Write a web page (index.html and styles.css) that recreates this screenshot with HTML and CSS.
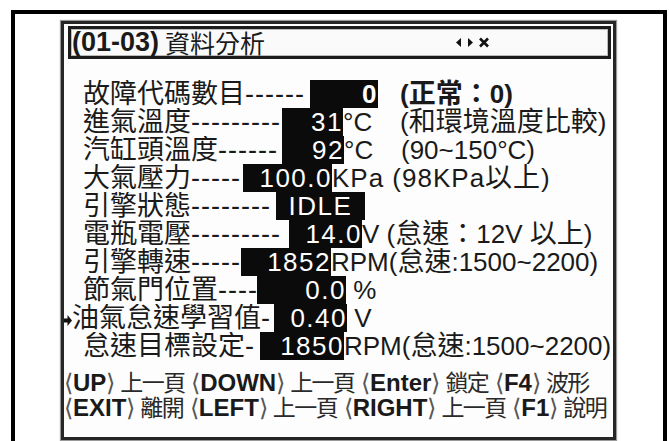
FILE: index.html
```html
<!DOCTYPE html>
<html lang="zh-Hant">

<head>
    <meta charset="UTF-8">
    <meta name="viewport" content="width=device-width, initial-scale=1.0">
    <title>資料分析</title>
    <link rel="stylesheet" href="styles.css">
</head>

<body>
    <div class="frame">
        <div class="screen">
            <div class="title">
                <span class="tcode">(01-03)</span>
                <span class="tname">資料分析</span>
                <svg class="nav" width="36" height="11" viewBox="0 0 36 11">
                    <polygon points="6,1 6,10 1,5.5" fill="#111" />
                    <polygon points="13,1 13,10 18,5.5" fill="#111" />
                    <path d="M25 1.5 L33 9.5 M33 1.5 L25 9.5" stroke="#111" stroke-width="2.6" />
                </svg>
            </div>

            <div class="rows">
                <div class="row r1">
                    <span class="lbl">故障代碼數目<span class="d">------</span></span>
                    <span class="val b">0</span>
                    <span class="note b">(<span class="c">正常：</span>0)</span>
                </div>
                <div class="row r2">
                    <span class="lbl">進氣溫度<span class="d">---------</span></span>
                    <span class="val">31</span>
                    <span class="unit deg">°C</span>
                    <span class="note">(<span class="c">和環境溫度比較</span>)</span>
                </div>
                <div class="row r3">
                    <span class="lbl">汽缸頭溫度<span class="d">------</span></span>
                    <span class="val">92</span>
                    <span class="unit deg">°C</span>
                    <span class="note">(90~150°C)</span>
                </div>
                <div class="row r4">
                    <span class="lbl">大氣壓力<span class="d">-----</span></span>
                    <span class="val">100.0</span>
                    <span class="unit wide">KPa (98KPa<span class="c">以上</span>)</span>
                </div>
                <div class="row r5">
                    <span class="lbl">引擎狀態<span class="d">--------</span></span>
                    <span class="val mid">IDLE</span>
                </div>
                <div class="row r6">
                    <span class="lbl">電瓶電壓<span class="d">---------</span></span>
                    <span class="val">14.0</span>
                    <span class="unit">V (<span class="c">怠速：</span>12V <span class="c">以上</span>)</span>
                </div>
                <div class="row r7">
                    <span class="lbl">引擎轉速<span class="d">-----</span></span>
                    <span class="val">1852</span>
                    <span class="unit">RPM(<span class="c">怠速</span>:1500~2200)</span>
                </div>
                <div class="row r8">
                    <span class="lbl">節氣門位置<span class="d">----</span></span>
                    <span class="val">0.0</span>
                    <span class="unit"> %</span>
                </div>
                <div class="row r9">
                    <span class="lbl"><svg class="mark" width="8" height="11" viewBox="0 0 8 11">
                            <polygon points="0,3.5 3.5,3.5 3.5,0 8,5.5 3.5,11 3.5,7.5 0,7.5" fill="#111" />
                        </svg>油氣怠速學習值<span class="d">-</span></span>
                    <span class="val">0.40</span>
                    <span class="unit"> V</span>
                </div>
                <div class="row r10">
                    <span class="lbl">怠速目標設定<span class="d">-</span></span>
                    <span class="val">1850</span>
                    <span class="unit">RPM(<span class="c">怠速</span>:1500~2200)</span>
                </div>
            </div>

            <div class="keys">
                <div class="krow">
                    <span class="br">⟨</span><b>UP</b><span class="br">⟩</span><span class="kt">上一頁</span>
                    <span class="br">⟨</span><b>DOWN</b><span class="br">⟩</span><span class="kt">上一頁</span>
                    <span class="br">⟨</span><b>Enter</b><span class="br">⟩</span><span class="kt">鎖定</span>
                    <span class="br">⟨</span><b>F4</b><span class="br">⟩</span><span class="kt">波形</span>
                </div>
                <div class="krow">
                    <span class="br">⟨</span><b>EXIT</b><span class="br">⟩</span><span class="kt">離開</span>
                    <span class="br">⟨</span><b>LEFT</b><span class="br">⟩</span><span class="kt">上一頁</span>
                    <span class="br">⟨</span><b>RIGHT</b><span class="br">⟩</span><span class="kt">上一頁</span>
                    <span class="br">⟨</span><b>F1</b><span class="br">⟩</span><span class="kt">說明</span>
                </div>
            </div>
        </div>
    </div>
</body>

</html>
```

FILE: styles.css
```css
body {
    margin: 0;
    background-color: #fff;
    color: #1a1a1a;
    font-family: "Liberation Sans", "Noto Sans CJK TC", sans-serif;
    overflow: hidden;
    height: 441px;
}

.frame {
    margin: 10px 0 0 11px;
    width: 656px;
    height: 431px;
    border: 4px solid #000;
    border-bottom: none;
    padding: 7px 0 0 46px;
    box-sizing: border-box;
}

.screen {
    width: 555px;
    height: 419px;
    border: 3px solid #262626;
    box-shadow: 0 0 1px 1px #9a9a9a;
    box-sizing: border-box;
    background: #fdfdfd;
}

/* title bar */
.title {
    margin: 2px 2px 0 4px;
    height: 33px;
    border: 3px solid #1c1c1c;
    box-shadow: inset 0 0 0 1px #bbb;
    box-sizing: border-box;
    display: flex;
    align-items: center;
    padding-left: 1px;
    background: #fafafa;
}

.tcode {
    font-size: 27px;
    font-weight: bold;
    line-height: 27px;
}

.tname {
    font-family: "Noto Sans CJK TC", sans-serif;
    font-size: 25px;
    line-height: 27px;
    margin-left: 6px;
}

.nav {
    margin-left: auto;
    margin-right: 117px;
}

/* data rows */
.rows {
    margin-top: 21px;
}

.row {
    display: flex;
    height: 28px;
    line-height: 28px;
    font-size: 26px;
    white-space: pre;
    padding-left: 19px;
}

.c {
    font-size: 27px;
}

.lbl {
    font-size: 27px;
    overflow: hidden;
    flex: none;
}

.lbl .d {
    letter-spacing: 1px;
}

.val {
    background: #0b0b0b;
    color: #fff;
    text-align: right;
    flex: none;
    box-sizing: border-box;
    letter-spacing: 1.5px;
}

.val.mid {
    text-align: center;
}

.b {
    font-weight: bold;
}

.unit.deg {
    width: 35px;
}

.unit.wide {
    letter-spacing: 1px;
}

.note {
    margin-left: 22px;
}

.r1 .lbl { width: 227px; }
.r1 .val { width: 68px; }
.r2 .lbl, .r3 .lbl { width: 199px; }
.r2 .val { width: 61px; }
.r3 .val { width: 62px; }
.r4 .lbl { width: 160px; }
.r4 .val { width: 89px; }
.r5 .lbl { width: 193px; }
.r5 .val { width: 89px; }
.r6 .lbl { width: 206px; }
.r6 .val { width: 73px; }
.r7 .lbl { width: 158px; }
.r7 .val { width: 90px; }
.r8 .lbl { width: 174px; }
.r8 .val { width: 89px; }
.r9 { padding-left: 0; }
.r9 .lbl { width: 210px; }
.r9 .val { width: 73px; }
.r10 .lbl { width: 177px; }
.r10 .val { width: 84px; }

.mark {
    vertical-align: 1px;
}

/* key legend */
.keys {
    margin-top: 9px;
}

.krow {
    height: 25px;
    line-height: 25px;
    font-size: 24px;
    color: #2a2a2a;
    white-space: nowrap;
}

.krow b {
    color: #1a1a1a;
}

.kt {
    font-family: "Noto Sans CJK TC", sans-serif;
    font-size: 23px;
    letter-spacing: -1.6px;
    margin-left: 5px;
}

.br {
    font-family: "DejaVu Sans", sans-serif;
    font-size: 24px;
    font-weight: 200;
    color: #555;
}
```
